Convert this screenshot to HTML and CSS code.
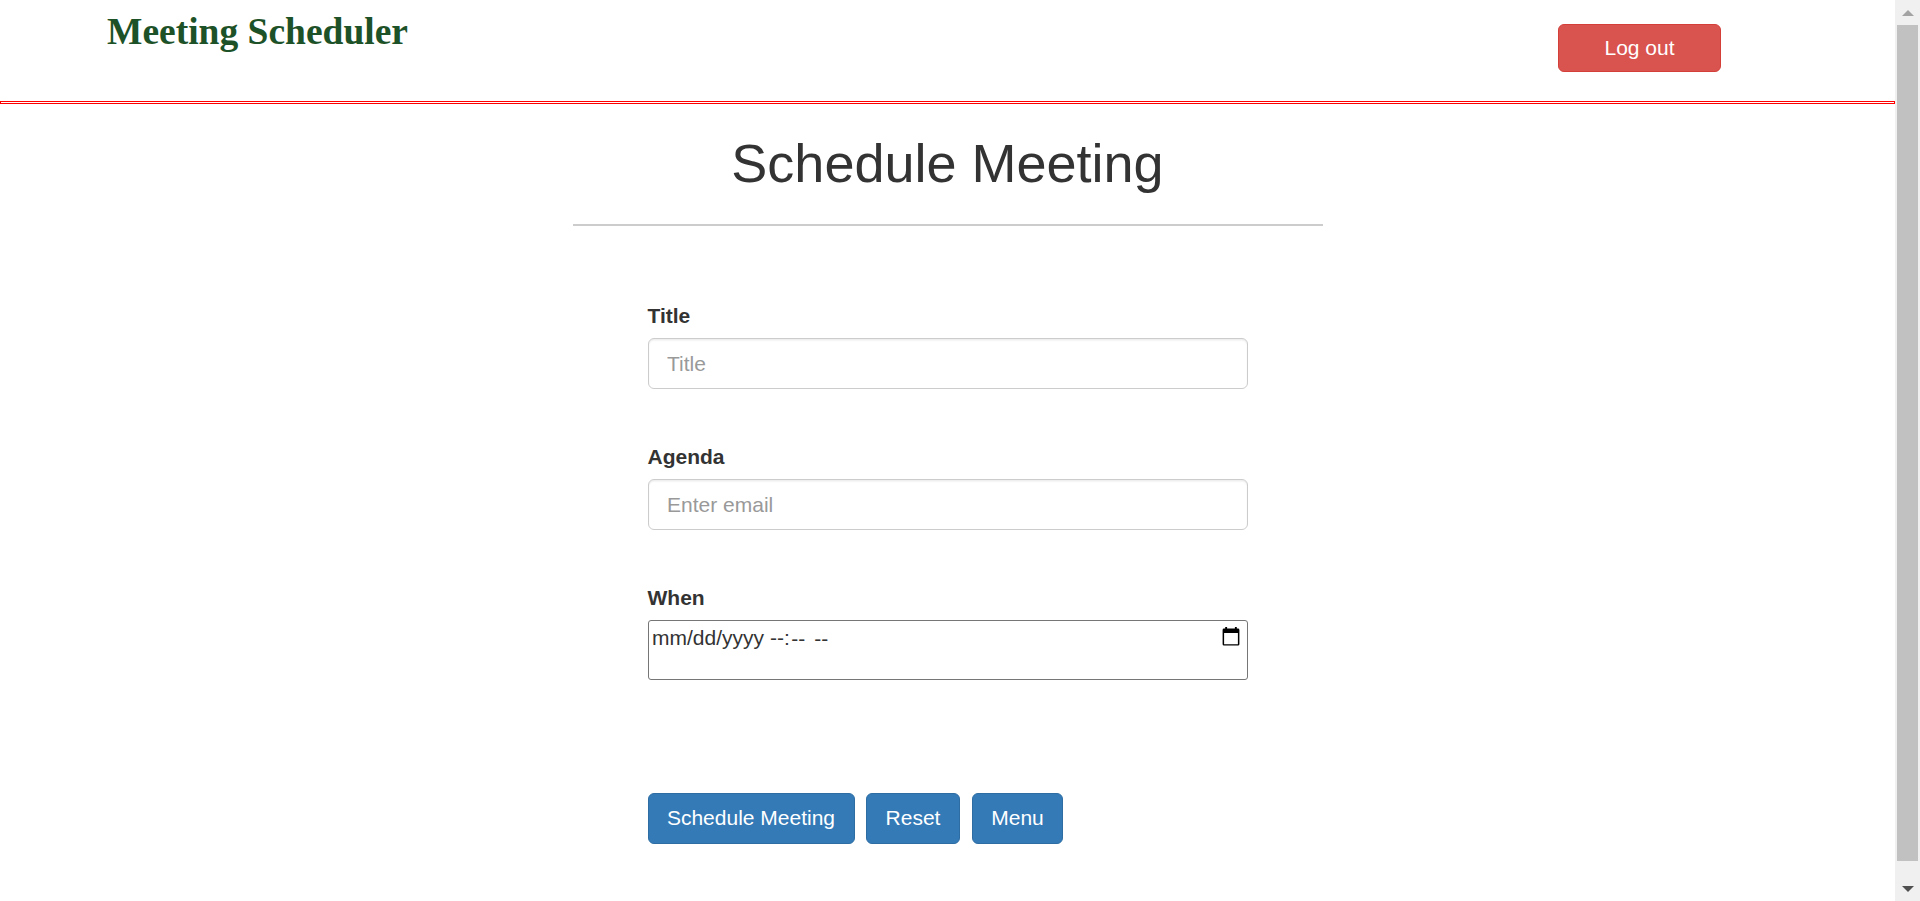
FILE: index.html
```html
<!DOCTYPE html>
<html lang="en">
<head>
<meta charset="utf-8">
<title>Meeting Scheduler</title>
<link rel="stylesheet" href="styles.css">
</head>
<body>
<div class="page">
  <header class="header">
    <h2 class="brand">Meeting Scheduler</h2>
    <button class="btn btn-danger" type="button">Log out</button>
  </header>
  <div class="rule"></div>
  <main class="content">
    <h1 class="heading">Schedule Meeting</h1>
    <form class="form">
      <div class="group">
        <label class="label" for="title">Title</label>
        <input class="control" id="title" type="text" placeholder="Title">
      </div>
      <div class="group">
        <label class="label" for="agenda">Agenda</label>
        <input class="control" id="agenda" type="text" placeholder="Enter email">
      </div>
      <div class="group">
        <label class="label">When</label>
        <div class="datetime">
          <span class="date">mm/dd/yyyy</span><span class="hour">--:</span><span class="minute">--</span><span class="period">--</span>
          <svg class="calendar" width="18" height="20" viewBox="0 0 18 20">
            <path d="M3.2 0h1.9v1.6h7.8V0h1.9v1.6h1.2a1.4 1.4 0 0 1 1.4 1.4v14.2a1.4 1.4 0 0 1-1.4 1.4H2a1.4 1.4 0 0 1-1.4-1.4V3A1.4 1.4 0 0 1 2 1.6h1.2zM2.1 6v11.2h13.8V6z" fill-rule="evenodd"/>
          </svg>
        </div>
      </div>
      <div class="actions">
        <button class="btn btn-primary submit" type="button">Schedule Meeting</button>
        <button class="btn btn-primary reset" type="button">Reset</button>
        <button class="btn btn-primary menu" type="button">Menu</button>
      </div>
    </form>
  </main>
</div>
<div class="scrollbar">
  <svg class="arrow" width="12" height="6" viewBox="0 0 12 6"><path d="M0 6L6 0l6 6z" fill="#a3a3a3"/></svg>
  <div class="thumb"></div>
  <svg class="arrow" width="12" height="6" viewBox="0 0 12 6"><path d="M0 0h12L6 6z" fill="#505050"/></svg>
</div>
</body>
</html>
```
FILE: styles.css
```css
* { box-sizing: border-box; }
body {
  margin: 0;
  height: 901px;
  display: flex;
  overflow: hidden;
  background: #fff;
  color: #333;
  font: 21px/30px "Liberation Sans", Arial, sans-serif;
}
.page { width: 1895px; }
.header {
  height: 101px;
  padding: 0 174px 0 107px;
  display: flex;
  justify-content: space-between;
  align-items: flex-start;
}
.brand {
  margin: 10px 0 0;
  color: #1d5127;
  font: bold 37.5px/43px "Liberation Serif", "Times New Roman", serif;
}
.rule { height: 3px; border: 1px solid #f00; }
.content { width: 750px; margin: 0 auto; }
.heading {
  margin: 0;
  height: 122px;
  padding-top: 30px;
  border-bottom: 2px solid #ccc;
  text-align: center;
  font-size: 54px;
  font-weight: 500;
  line-height: 59px;
}
.form { padding: 75px 75px 0; }
.group { height: 141px; }
.label {
  display: block;
  height: 37px;
  font-weight: bold;
}
.control {
  display: block;
  width: 100%;
  height: 51px;
  padding: 9px 18.5px;
  border: 1px solid #ccc;
  border-radius: 6px;
  box-shadow: inset 0 1.5px 1.5px rgba(0, 0, 0, .075);
  font: inherit;
}
.control::placeholder { color: #999; opacity: 1; }
.datetime {
  display: flex;
  height: 60px;
  padding: 2px 3px 2px 3.5px;
  border: 1px solid #767676;
  border-radius: 3px;
}
.hour { margin-left: 6px; }
.minute { margin-left: 1.5px; padding-top: 1px; }
.period { margin-left: 9px; padding-top: 1px; }
.calendar { margin: 4px 3.5px 0 auto; }
.actions { display: flex; padding-top: 69px; }
.btn {
  height: 51px;
  padding: 0;
  border: 1px solid;
  border-radius: 6px;
  color: #fff;
  font: inherit;
}
.btn-danger {
  width: 163px;
  height: 48px;
  margin-top: 24px;
  background: #d9534f;
  border-color: #d43f3a;
}
.btn-primary {
  padding-bottom: 1px;
  background: #337ab7;
  border-color: #2e6da4;
}
.submit { width: 207px; }
.reset { width: 94px; margin-left: 11px; padding-left: 1px; }
.menu { width: 91px; margin-left: 12px; padding-left: 1px; }
.scrollbar {
  width: 25px;
  padding: 10px 0 9px;
  display: flex;
  flex-direction: column;
  justify-content: space-between;
  align-items: center;
  background: #f0f0f0;
}
.arrow { flex: none; }
.thumb { width: 21px; height: 836px; margin-bottom: 16px; background: #c1c1c1; }
```
